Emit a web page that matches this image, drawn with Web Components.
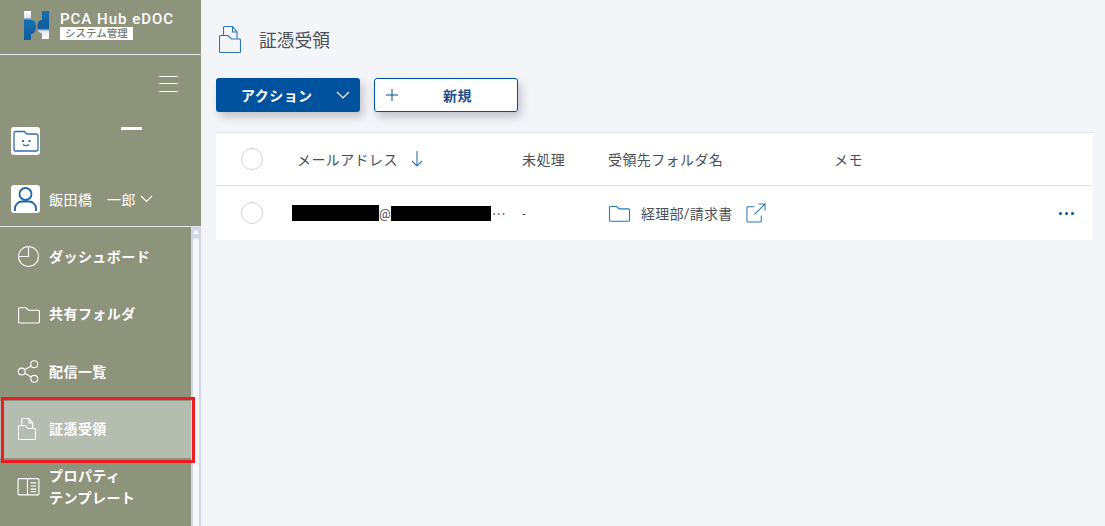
<!DOCTYPE html>
<html lang="ja">
<head>
<meta charset="utf-8">
<title>証憑受領</title>
<style>
  html, body { margin: 0; height: 526px; overflow: hidden; background: #f4f5f8; }
  body { font-family: Roboto, "Noto Sans CJK JP", sans-serif; position: relative; }
  app-shell { height: 526px; }
</style>
</head>
<body>
<app-shell>
  <side-bar slot="side">
    <nav-item icon="clock" label="ダッシュボード"></nav-item>
    <nav-item icon="folder" label="共有フォルダ"></nav-item>
    <nav-item icon="share" label="配信一覧"></nav-item>
    <nav-item icon="doc" label="証憑受領" active></nav-item>
    <nav-item icon="book" label="プロパティ テンプレート"></nav-item>
  </side-bar>
  <page-head>証憑受領</page-head>
  <tool-bar></tool-bar>
  <mail-table></mail-table>
</app-shell>
<red-mark></red-mark>

<script>
  const ICONS = {
    clock: '<circle cx="12" cy="12" r="9.6"/><path d="M12 2.4V12H2.4"/>',
    folder: '<path d="M2.5 6.5a1 1 0 0 1 1-1h6l2.6 2.4h9.4a1 1 0 0 1 1 1v10.3a1 1 0 0 1-1 1h-18a1 1 0 0 1-1-1z"/>',
    share: '<circle cx="17.5" cy="5" r="3.3"/><circle cx="5.5" cy="12" r="3.3"/><circle cx="17.5" cy="19" r="3.3"/><path d="M8.4 10.4l6.2-3.7M8.4 13.6l6.2 3.7"/>',
    book: '<rect x="2" y="4.500" width="20" height="15.500" rx="1"/><path d="M11 4.500V20M14 8.500h5.500M14 11.500h5.500M14 14.500h5.500M14 17h5.500"/>'
  };

  const DOC_PATHS = '<path d="M4.500 9V1.500a1 1 0 0 1 1-1h8l4.500 5.500v7"/><path d="M13.500 .5V6H18"/>' +
    '<path d="M.5 10.500a1 1 0 0 1 1-1H9l3.500 3.500h8a1 1 0 0 1 1 1V25.500a1 1 0 0 1-1 1h-19a1 1 0 0 1-1-1z"/>';

  const svgIcon = (name, size, color) =>
    `<svg width="${size}" height="${size}" viewBox="0 0 24 24" fill="none" stroke="${color}" stroke-width="1.1">${ICONS[name]}</svg>`;

  const docIcon = (w, h, color, sw) =>
    `<svg width="${w}" height="${h}" viewBox="0 0 22 27" fill="none" stroke="${color}" stroke-width="${sw}">${DOC_PATHS}</svg>`;

  customElements.define("app-shell", class extends HTMLElement {
    constructor() {
      super();
      this.attachShadow({ mode: "open" }).innerHTML = `
        <style>
          :host { display: flex; align-items: stretch; }
          main { flex: 1; min-width: 0; padding: 0 12px 0 15px; }
        </style>
        <slot name="side"></slot>
        <main><slot></slot></main>`;
    }
  });

  customElements.define("side-bar", class extends HTMLElement {
    constructor() {
      super();
      this.attachShadow({ mode: "open" }).innerHTML = `
        <style>
          :host { display: flex; width: 201px; height: 526px; flex: none; background: #8e947c; color: #fff; overflow: hidden; }
          .col { width: 201px; flex: none; display: flex; flex-direction: column; }
          .logo { height: 55px; box-sizing: border-box; border-bottom: 1px solid #dfe3ea; display: flex; padding: 11px 0 0 24px; gap: 11px; }
          .name { font: 500 15px/16px Roboto, sans-serif; letter-spacing: 1px; white-space: nowrap; }
          .sub { background: #fff; color: #787b70; font-size: 10.5px; font-weight: 500; line-height: 13px; height: 13px; width: 73px; padding-left: 5px; box-sizing: border-box; white-space: nowrap; }
          .burger { height: 37px; margin-top: 21px; display: flex; justify-content: flex-end; padding-right: 23px; box-sizing: border-box; }
          .burger i { display: block; width: 19px; height: 16px; border-top: 1px solid #fff; border-bottom: 1px solid #fff; position: relative; box-sizing: border-box; }
          .burger i::after { content: ""; position: absolute; left: 0; right: 0; top: 6px; height: 1px; background: #fff; }
          .org { height: 28px; margin-top: 14px; padding-left: 11px; display: flex; position: relative; }
          .org b { position: absolute; left: 121px; top: 0; width: 21px; height: 3px; background: #fff; }
          .tile { width: 29px; height: 28px; background: #fff; border-radius: 3px; display: flex; align-items: center; justify-content: center; flex: none; }
          .user { height: 29px; margin-top: 29px; padding-left: 11px; display: flex; align-items: center; gap: 9px; font-size: 14px; letter-spacing: .5px; white-space: nowrap; }
          .sep { height: 1px; background: #dfe3ea; margin-top: 13px; flex: none; }
          .list { display: flex; flex-direction: column; padding-top: 1px; }
          .bar { width: 10px; flex: none; background: #d3d6e4; margin-left: -10px; margin-top: 227px; position: relative; z-index: 1; }
          .bar em { display: block; width: 6px; height: 5px; margin: 2px 0 0 2px; background: #f7f7fa; clip-path: polygon(50% 0, 100% 100%, 0 100%); }
          .bar i { display: block; margin: 4px 0 0 2px; width: 6px; height: 290px; background: #f7f7fa; border-radius: 3px; }
        </style>
        <div class="col">
          <div class="logo">
            <svg width="25" height="29" viewBox="0 0 25 29">
              <defs>
                <linearGradient id="a" x1="0" y1="0" x2="0" y2="1"><stop offset="0" stop-color="#ffffff"/><stop offset=".22" stop-color="#e4e8ea"/><stop offset=".32" stop-color="#1470b6"/><stop offset="1" stop-color="#0f5a9c"/></linearGradient>
                <linearGradient id="b" x1="0" y1="0" x2="0" y2="1"><stop offset="0" stop-color="#1670b4"/><stop offset=".62" stop-color="#0f5a9c"/><stop offset=".72" stop-color="#e4e8ea"/><stop offset="1" stop-color="#ffffff"/></linearGradient>
              </defs>
              <path fill="url(#a)" d="M0 0h7v9h.5c2.800 0 4.500 3 4.500 7s-1.700 7-4.500 7H7v6H0z"/>
              <path fill="url(#b)" d="M18 0h7v28h-7v-6h-.5c-2.800 0-4-3-4-6.500S14.700 9 17.500 9h.5z"/>
            </svg>
            <div>
              <div class="name">PCA Hub eDOC</div>
              <div class="sub">システム管理</div>
            </div>
          </div>
          <div class="burger"><i></i></div>
          <div class="org"><b></b><span class="tile">
            <svg width="26" height="23" viewBox="0 0 26 23" fill="none" stroke="#2f6eb0" stroke-width="1.300"><path d="M1 3a1.500 1.500 0 0 1 1.500-1.500h9l2.500 2.500h9.500a1.500 1.500 0 0 1 1.500 1.500v14a1.500 1.500 0 0 1-1.500 1.500h-21a1.500 1.500 0 0 1-1.500-1.500z"/><path d="M10 14.500c1.500 1.600 4.500 1.600 6 0"/><path stroke-width="2" d="M10 10v2M16.500 10v2"/></svg>
          </span></div>
          <div class="user"><span class="tile">
            <svg width="25" height="26" viewBox="0 0 25 26" fill="none" stroke="#1f66ac" stroke-width="1.800"><circle cx="12.500" cy="8" r="6"/><path d="M2 25v-2.500a7 7 0 0 1 7-7h7a7 7 0 0 1 7 7V25"/></svg>
          </span><span>飯田橋　一郎</span>
            <svg width="13" height="8" viewBox="0 0 13 8" fill="none" stroke="#fff" stroke-width="1.100" style="margin-left:-5px"><path d="M1 1l5.500 5.500L12 1"/></svg>
          </div>
          <div class="sep"></div>
          <div class="list"><slot></slot></div>
        </div>
        <div class="bar"><em></em><i></i></div>`;
    }
  });

  customElements.define("nav-item", class extends HTMLElement {
    connectedCallback() {
      const label = this.getAttribute("label").replace(" ", "<br>");
      const name = this.getAttribute("icon");
      const icon = name === "doc"
        ? `<span class="doc">${docIcon(18, 22, "#fff", 1.3)}</span>`
        : svgIcon(name, 25, "#fff");
      this.attachShadow({ mode: "open" }).innerHTML = `
        <style>
          :host { display: flex; align-items: center; gap: 8px; height: 57.5px; padding-left: 16px; box-sizing: border-box; width: 191px; color: #fff; font-size: 14px; font-weight: 700; line-height: 22px; letter-spacing: .45px; }
          :host([active]) { background: #b5bcb0; }
          svg { flex: none; display: block; }
          .doc { width: 25px; padding-left: 2px; box-sizing: border-box; flex: none; }
        </style>
        ${icon}
        <span>${label}</span>`;
    }
  });

  customElements.define("page-head", class extends HTMLElement {
    constructor() {
      super();
      this.attachShadow({ mode: "open" }).innerHTML = `
        <style>
          :host { display: flex; align-items: center; height: 78px; gap: 18px; padding-left: 3px; color: #4a4f58; font-size: 17.750px; }
          span { margin-bottom: 1px; }
        </style>
        ${docIcon(22, 27, "#2a77b8", 1.1)}
        <span><slot></slot></span>`;
    }
  });

  customElements.define("tool-bar", class extends HTMLElement {
    constructor() {
      super();
      this.attachShadow({ mode: "open" }).innerHTML = `
        <style>
          :host { display: flex; gap: 14px; height: 34px; font-size: 14px; font-weight: 700; letter-spacing: .45px; }
          div { box-sizing: border-box; height: 34px; border-radius: 3px; display: flex; align-items: center; box-shadow: 3px 5px 8px rgba(60, 70, 90, .28); }
          .act { width: 144px; background: #00529f; color: #fff; padding-left: 25px; }
          .act svg { margin-left: 23px; }
          .new { width: 144px; background: #fff; border: 1px solid #00529f; color: #1f4f8a; padding-left: 11px; }
          .new span { margin-left: 45px; }
        </style>
        <div class="act"><span>アクション</span>
          <svg width="14" height="8" viewBox="0 0 14 8" fill="none" stroke="#fff" stroke-width="1.200"><path d="M1 1l6 6 6-6"/></svg></div>
        <div class="new">
          <svg width="12" height="12" viewBox="0 0 12 12" fill="none" stroke="#00529f" stroke-width="1"><path d="M6 0v12M0 6h12"/></svg>
          <span>新規</span></div>`;
    }
  });

  customElements.define("mail-table", class extends HTMLElement {
    constructor() {
      super();
      this.attachShadow({ mode: "open" }).innerHTML = `
        <style>
          :host { display: block; margin-top: 20px; background: #fff; border-top: 1px solid #e3e5ee; color: #4a4f58; font-size: 14px; letter-spacing: .4px; }
          .row { display: grid; grid-template-columns: 76px 230px 86px 226px 1fr 36px; align-items: center; }
          .head { height: 53px; border-bottom: 1px solid #e2e3e8; box-sizing: border-box; }
          .body { height: 54px; }
          .body > *, .head > * { white-space: nowrap; }
          u { display: block; box-sizing: border-box; width: 22px; height: 22px; margin-left: 25px; border: 1px solid #ccd3e2; border-radius: 50%; }
          .sort { display: flex; align-items: center; gap: 13px; margin-left: 5px; }
          .mail { display: flex; align-items: center; font-size: 13px; letter-spacing: 0; }
          .mail s { display: block; height: 16px; background: #000; text-decoration: none; flex: none; }
          .mail s:first-child { width: 87px; }
          .mail s:nth-child(3) { width: 100px; height: 15px; }
          .more { font: 14px "Noto Sans CJK JP", sans-serif; margin-left: 1px; color: #4a4f58; }
          .dash { font-size: 13px; }
          .dest { display: flex; align-items: center; letter-spacing: .25px; margin-left: -1px; }
          .dots { display: flex; gap: 3px; margin-left: 2px; }
          .dots i { width: 3px; height: 3px; border-radius: 50%; background: #00529f; }
        </style>
        <div class="row head">
          <u></u>
          <div class="sort"><span>メールアドレス</span>
            <svg width="12" height="16" viewBox="0 0 12 16" fill="none" stroke="#2a77b8" stroke-width="1.100"><path d="M6 0v15M1 10l5 5 5-5"/></svg></div>
          <div>未処理</div>
          <div>受領先フォルダ名</div>
          <div>メモ</div>
          <div></div>
        </div>
        <div class="row body">
          <u></u>
          <div class="mail"><s></s><span>@</span><s></s><span class="more">…</span></div>
          <div class="dash">-</div>
          <div class="dest">
            ${svgIcon("folder", 24, "#2a77b8")}
            <span style="margin-left:10px">経理部/請求書</span>
            <svg style="margin-left:13px" width="20" height="20" viewBox="0 0 21 21" fill="none" stroke="#2a77b8" stroke-width="1.100"><path d="M9 4H2a1 1 0 0 0-1 1v14a1 1 0 0 0 1 1h13a1 1 0 0 0 1-1v-6M9 12L20 1M13 1h7v7"/></svg>
          </div>
          <div></div>
          <div class="dots"><i></i><i></i><i></i></div>
        </div>`;
    }
  });

  // annotation box drawn over the screenshot
  customElements.define("red-mark", class extends HTMLElement {
    constructor() {
      super();
      this.attachShadow({ mode: "open" }).innerHTML = `
        <style>
          :host { position: absolute; z-index: 2; left: 1px; top: 397px; width: 194px; height: 66px; box-sizing: border-box; border: 3px solid #ec1c24; }
        </style>`;
    }
  });
</script>
</body>
</html>
